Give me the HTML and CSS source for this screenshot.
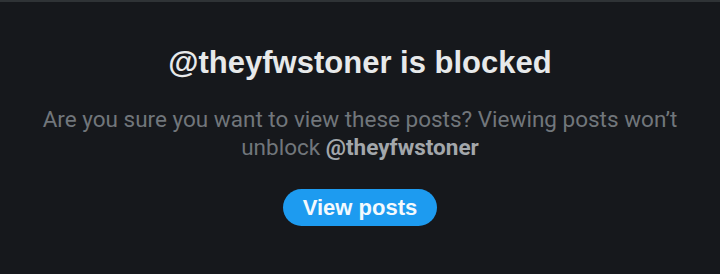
FILE: index.html
```html
<!DOCTYPE html>
<html>
<head>
<meta charset="utf-8">
<link rel="stylesheet" href="styles.css">
</head>
<body>
<main class="panel">
  <h1 class="title">@theyfwstoner is blocked</h1>
  <p class="desc">Are you sure you want to view these posts? Viewing posts won’t unblock <strong class="handle">@theyfwstoner</strong></p>
  <button class="btn">View posts</button>
</main>
</body>
</html>
```
FILE: styles.css
```css
html, body {
  margin: 0;
  padding: 0;
  background: #16181c;
  height: 100%;
}
body {
  border-top: 2px solid #2f3336;
  box-sizing: border-box;
  font-family: Roboto, "Noto Sans", sans-serif;
}
.panel {
  display: flex;
  flex-direction: column;
  align-items: center;
  padding: 43px 36px 0;
}
.title {
  margin: 0;
  font-family: "Liberation Sans", Arial, sans-serif;
  font-size: 31px;
  font-weight: 700;
  color: #e7e9ea;
  line-height: 36px;
}
.desc {
  margin: 24px 0 0;
  font-size: 22.5px;
  line-height: 28px;
  color: #71767b;
  text-align: center;
}
.handle {
  color: #a3a7ab;
  font-weight: 700;
}
.btn {
  margin-top: 28px;
  background: #1d9bf0;
  color: #f4f9fd;
  border: none;
  border-radius: 19px;
  height: 37px;
  padding: 0 20px;
  font-family: "Liberation Sans", Arial, sans-serif;
  font-size: 22px;
  font-weight: 700;
}
```
